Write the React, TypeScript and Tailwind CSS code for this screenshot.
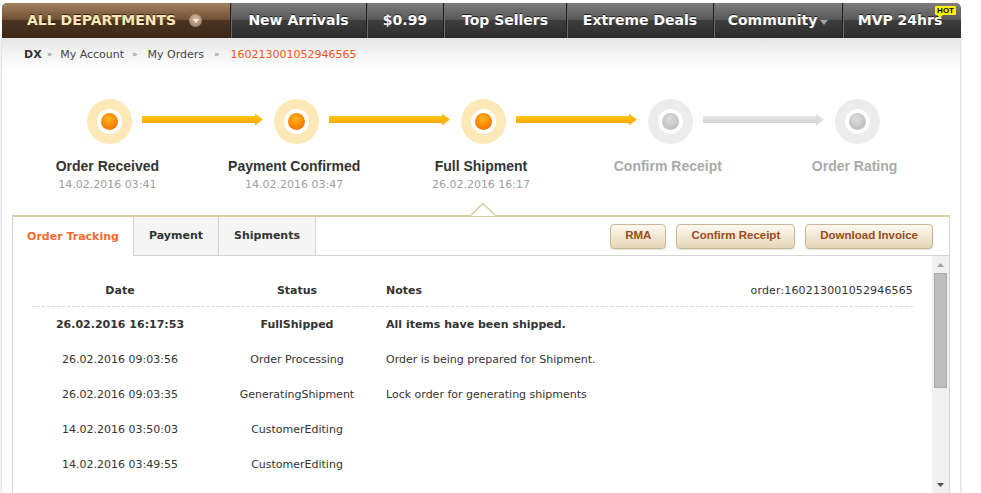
import React from 'react';

const steps = [
  { label: 'Order Received', date: '14.02.2016 03:41', done: true },
  { label: 'Payment Confirmed', date: '14.02.2016 03:47', done: true },
  { label: 'Full Shipment', date: '26.02.2016 16:17', done: true },
  { label: 'Confirm Receipt', date: '', done: false },
  { label: 'Order Rating', date: '', done: false },
];

const rows = [
  { date: '26.02.2016 16:17:53', status: 'FullShipped', notes: 'All items have been shipped.', bold: true },
  { date: '26.02.2016 09:03:56', status: 'Order Processing', notes: 'Order is being prepared for Shipment.', bold: false },
  { date: '26.02.2016 09:03:35', status: 'GeneratingShipment', notes: 'Lock order for generating shipments', bold: false },
  { date: '14.02.2016 03:50:03', status: 'CustomerEditing', notes: '', bold: false },
  { date: '14.02.2016 03:49:55', status: 'CustomerEditing', notes: '', bold: false },
];

function StepCircle({ done }: { done: boolean }) {
  return (
    <div
      className={`w-[45px] h-[45px] rounded-full flex items-center justify-center shrink-0 ${
        done ? 'bg-[#fde9b8]' : 'bg-[#ececec]'
      }`}
    >
      <div className="w-[25px] h-[25px] rounded-full bg-white flex items-center justify-center">
        <div
          className={`w-[17px] h-[17px] rounded-full ${
            done
              ? 'bg-[radial-gradient(circle_at_45%_35%,#ffb81f,#f88000_60%,#e95f00)]'
              : 'bg-[radial-gradient(circle_at_45%_35%,#dedede,#c4c4c4_60%,#b2b2b2)]'
          }`}
        />
      </div>
    </div>
  );
}

function StepArrow({ on, id }: { on: boolean; id: string }) {
  return (
    <svg width="121" height="13" viewBox="0 0 121 13" className="shrink-0 ml-[10px] mr-[11px] mb-[4px]">
      <defs>
        <linearGradient id={id} x1="0" y1="0" x2="0" y2="1">
          <stop offset="0" stopColor={on ? '#ffc419' : '#e6e6e6'} />
          <stop offset="1" stopColor={on ? '#ffa800' : '#d2d2d2'} />
        </linearGradient>
      </defs>
      <rect x="0" y="3" width="114" height="7" fill={`url(#${id})`} />
      <polygon points="113,0.5 121,6.5 113,12.5" fill={`url(#${id})`} />
    </svg>
  );
}

function NavItem({ children, w }: { children: React.ReactNode; w: string }) {
  return (
    <div
      className={`${w} h-full flex items-center justify-center border-l border-[#1f1f1f] shadow-[inset_1px_0_0_#6a6a6a] text-white font-bold text-[14px] [text-shadow:0_-1px_0_rgba(0,0,0,0.7)]`}
    >
      {children}
    </div>
  );
}

function Btn({ children }: { children: React.ReactNode }) {
  return (
    <button className="h-[25px] px-[14px] rounded-[4px] border border-[#c9b893] bg-[linear-gradient(#fdf9ef,#efe5cd_60%,#e4d6b6)] shadow-[0_1px_1px_rgba(0,0,0,0.12)] text-[#9c4a1c] font-bold text-[11.5px] font-['Liberation_Sans',Arial,sans-serif]">
      {children}
    </button>
  );
}

export default function App() {
  return (
    <div className="h-[493px] overflow-hidden bg-white font-['DejaVu_Sans',Verdana,sans-serif] text-[11px] text-[#333]">
      <div className="ml-[2px] w-[959px] pt-[3px]">
        {/* Top navigation */}
        <div className="h-[35px] flex rounded-t-[5px] overflow-hidden bg-[linear-gradient(#7d7d7d,#565656_50%,#3d3d3d_50%,#2c2c2c)]">
          <div className="w-[228px] h-full flex items-center pl-[25px] bg-[linear-gradient(#a5825f,#6d4d33_50%,#4d3321_50%,#3a2716)]">
            <span className="text-[#fae7b5] font-bold text-[14px] [text-shadow:0_-1px_0_rgba(0,0,0,0.6)]">ALL DEPARTMENTS</span>
            <span className="ml-[13px] w-[13px] h-[13px] rounded-full bg-[radial-gradient(circle_at_50%_40%,#d9c0aa,#a4846c_70%,#7d604b)] flex items-center justify-center">
              <svg width="6" height="4" viewBox="0 0 6 4">
                <polygon points="0,0 6,0 3,4" fill="#f7e9d6" />
              </svg>
            </span>
          </div>
          <NavItem w="w-[136px]">New Arrivals</NavItem>
          <NavItem w="w-[77px]">$0.99</NavItem>
          <NavItem w="w-[123px]">Top Sellers</NavItem>
          <NavItem w="w-[147px]">Extreme Deals</NavItem>
          <NavItem w="w-[129px]">
            <span>Community</span>
            <svg width="8" height="5" viewBox="0 0 8 5" className="ml-[3px] mt-[3px]">
              <polygon points="0,0 8,0 4,5" fill="#a5a5a5" />
            </svg>
          </NavItem>
          <div className="relative flex-1 h-full flex items-center justify-center border-l border-[#1f1f1f] shadow-[inset_1px_0_0_#6a6a6a] text-white font-bold text-[14px] [text-shadow:0_-1px_0_rgba(0,0,0,0.7)]">
            <span className="pr-[4px]">MVP 24hrs</span>
            <span className="absolute right-[5px] top-[3px] h-[9px] px-[2px] bg-[#fff200] text-black text-[8px] leading-[9px] font-bold rounded-[1px] [text-shadow:none] font-['Liberation_Sans',Arial,sans-serif]">
              HOT
              <span className="absolute left-[2px] top-[9px] w-0 h-0 border-l-[3px] border-l-transparent border-r-[3px] border-r-transparent border-t-[3px] border-t-[#fff200]" />
            </span>
          </div>
        </div>

        {/* Body */}
        <div className="w-[958px] shadow-[0_0_3px_rgba(0,0,0,0.28)] bg-white">
          {/* Breadcrumb */}
          <div className="h-[32px] flex items-center pt-[2px] pl-[22px] bg-[linear-gradient(#e6e6e6,#f6f6f6_60%,#ffffff)]">
            <span className="font-bold text-[#333]">DX</span>
            <span className="ml-[5px] mr-[8px] text-[#888] text-[9px]">»</span>
            <span className="text-[#444]">My Account</span>
            <span className="ml-[8px] mr-[10px] text-[#888] text-[9px]">»</span>
            <span className="text-[#444]">My Orders</span>
            <span className="ml-[10px] mr-[11px] text-[#888] text-[9px]">»</span>
            <span className="text-[#f4561c]">160213001052946565</span>
          </div>

          <div className="px-[10px]">
            {/* Steps */}
            <div className="relative pl-[4px] pt-[29px] pb-[23px]">
              <div className="flex items-center pl-[71px]">
                {steps.map((s, i) => (
                  <React.Fragment key={s.label}>
                    <StepCircle done={s.done} />
                    {i < steps.length - 1 && <StepArrow on={s.done} id={`ar${i}`} />}
                  </React.Fragment>
                ))}
              </div>
              <div className="flex mt-[14px]">
                {steps.map((s, i) => (
                  <div key={s.label} className="relative w-[187px] flex flex-col items-center">
                    <div
                      className={`pr-[4px] font-['Liberation_Sans',Arial,sans-serif] font-bold text-[14px] leading-[16px] ${
                        s.done ? 'text-[#333]' : 'text-[#aaa]'
                      }`}
                    >
                      {s.label}
                    </div>
                    <div className="mt-[4px] pr-[4px] h-[14px] leading-[14px] text-[#a0a0a0]">{s.date}</div>
                    {i === 2 && (
                      <svg
                        width="24"
                        height="14"
                        viewBox="0 0 24 14"
                        className="absolute left-1/2 -translate-x-1/2 top-[44px]"
                      >
                        <polygon points="0,14 12,1.5 24,14" fill="#fff" />
                        <polyline points="0,13 12,1.5 24,13" fill="none" stroke="#d8cf9f" strokeWidth="1.6" />
                      </svg>
                    )}
                  </div>
                ))}
              </div>
            </div>

            {/* Panel */}
            <div className="border-t-2 border-t-[#d8cfa0] border-x border-x-[#d4d4d4]">
              {/* Tabs bar */}
              <div className="flex h-[39px]">
                <div className="w-[120px] flex items-center justify-center pt-[1px] text-[#f96a2c] font-bold">Order Tracking</div>
                <div className="w-[85px] flex items-center justify-center pt-[1px] bg-[#f5f5f5] border-l border-b border-[#d4d4d4] font-bold">
                  Payment
                </div>
                <div className="w-[98px] flex items-center justify-center pt-[1px] bg-[#f5f5f5] border-l border-r border-b border-[#d4d4d4] font-bold">
                  Shipments
                </div>
                <div className="flex-1 flex items-center justify-end gap-[10px] pr-[16px] border-b border-[#d4d4d4]">
                  <Btn>RMA</Btn>
                  <Btn>Confirm Receipt</Btn>
                  <Btn>Download Invoice</Btn>
                </div>
              </div>

              {/* Content */}
              <div className="flex h-[237px] overflow-hidden">
                <div className="flex-1 px-[19px]">
                  <div className="flex pt-[28px] pb-[8px] leading-[14px] border-b border-dashed border-[#d6d6d6] font-bold">
                    <div className="w-[176px] text-center">Date</div>
                    <div className="w-[178px] text-center">Status</div>
                    <div className="flex-1 flex justify-between">
                      <span>Notes</span>
                      <span className="font-normal tracking-[0.15px]">order:160213001052946565</span>
                    </div>
                  </div>
                  {rows.map((r) => (
                    <div key={r.date} className={`flex h-[35px] items-center pt-[1px] leading-[14px] ${r.bold ? 'font-bold' : ''}`}>
                      <div className="w-[176px] text-center">{r.date}</div>
                      <div className="w-[178px] text-center">{r.status}</div>
                      <div className="flex-1">{r.notes}</div>
                    </div>
                  ))}
                </div>
                {/* Scrollbar */}
                <div className="w-[17px] h-full bg-[#f0f0f0] flex flex-col items-center">
                  <div className="h-[17px] flex items-center justify-center">
                    <svg width="7" height="4" viewBox="0 0 7 4">
                      <polygon points="0,4 7,4 3.5,0" fill="#a3a3a3" />
                    </svg>
                  </div>
                  <div className="w-[13px] h-[115px] bg-[#bdbdbd] border border-[#aaaaaa]" />
                  <div className="flex-1" />
                  <div className="h-[17px] flex items-center justify-center">
                    <svg width="7" height="4" viewBox="0 0 7 4">
                      <polygon points="0,0 7,0 3.5,4" fill="#505050" />
                    </svg>
                  </div>
                </div>
              </div>
            </div>
          </div>
        </div>
      </div>
    </div>
  );
}
